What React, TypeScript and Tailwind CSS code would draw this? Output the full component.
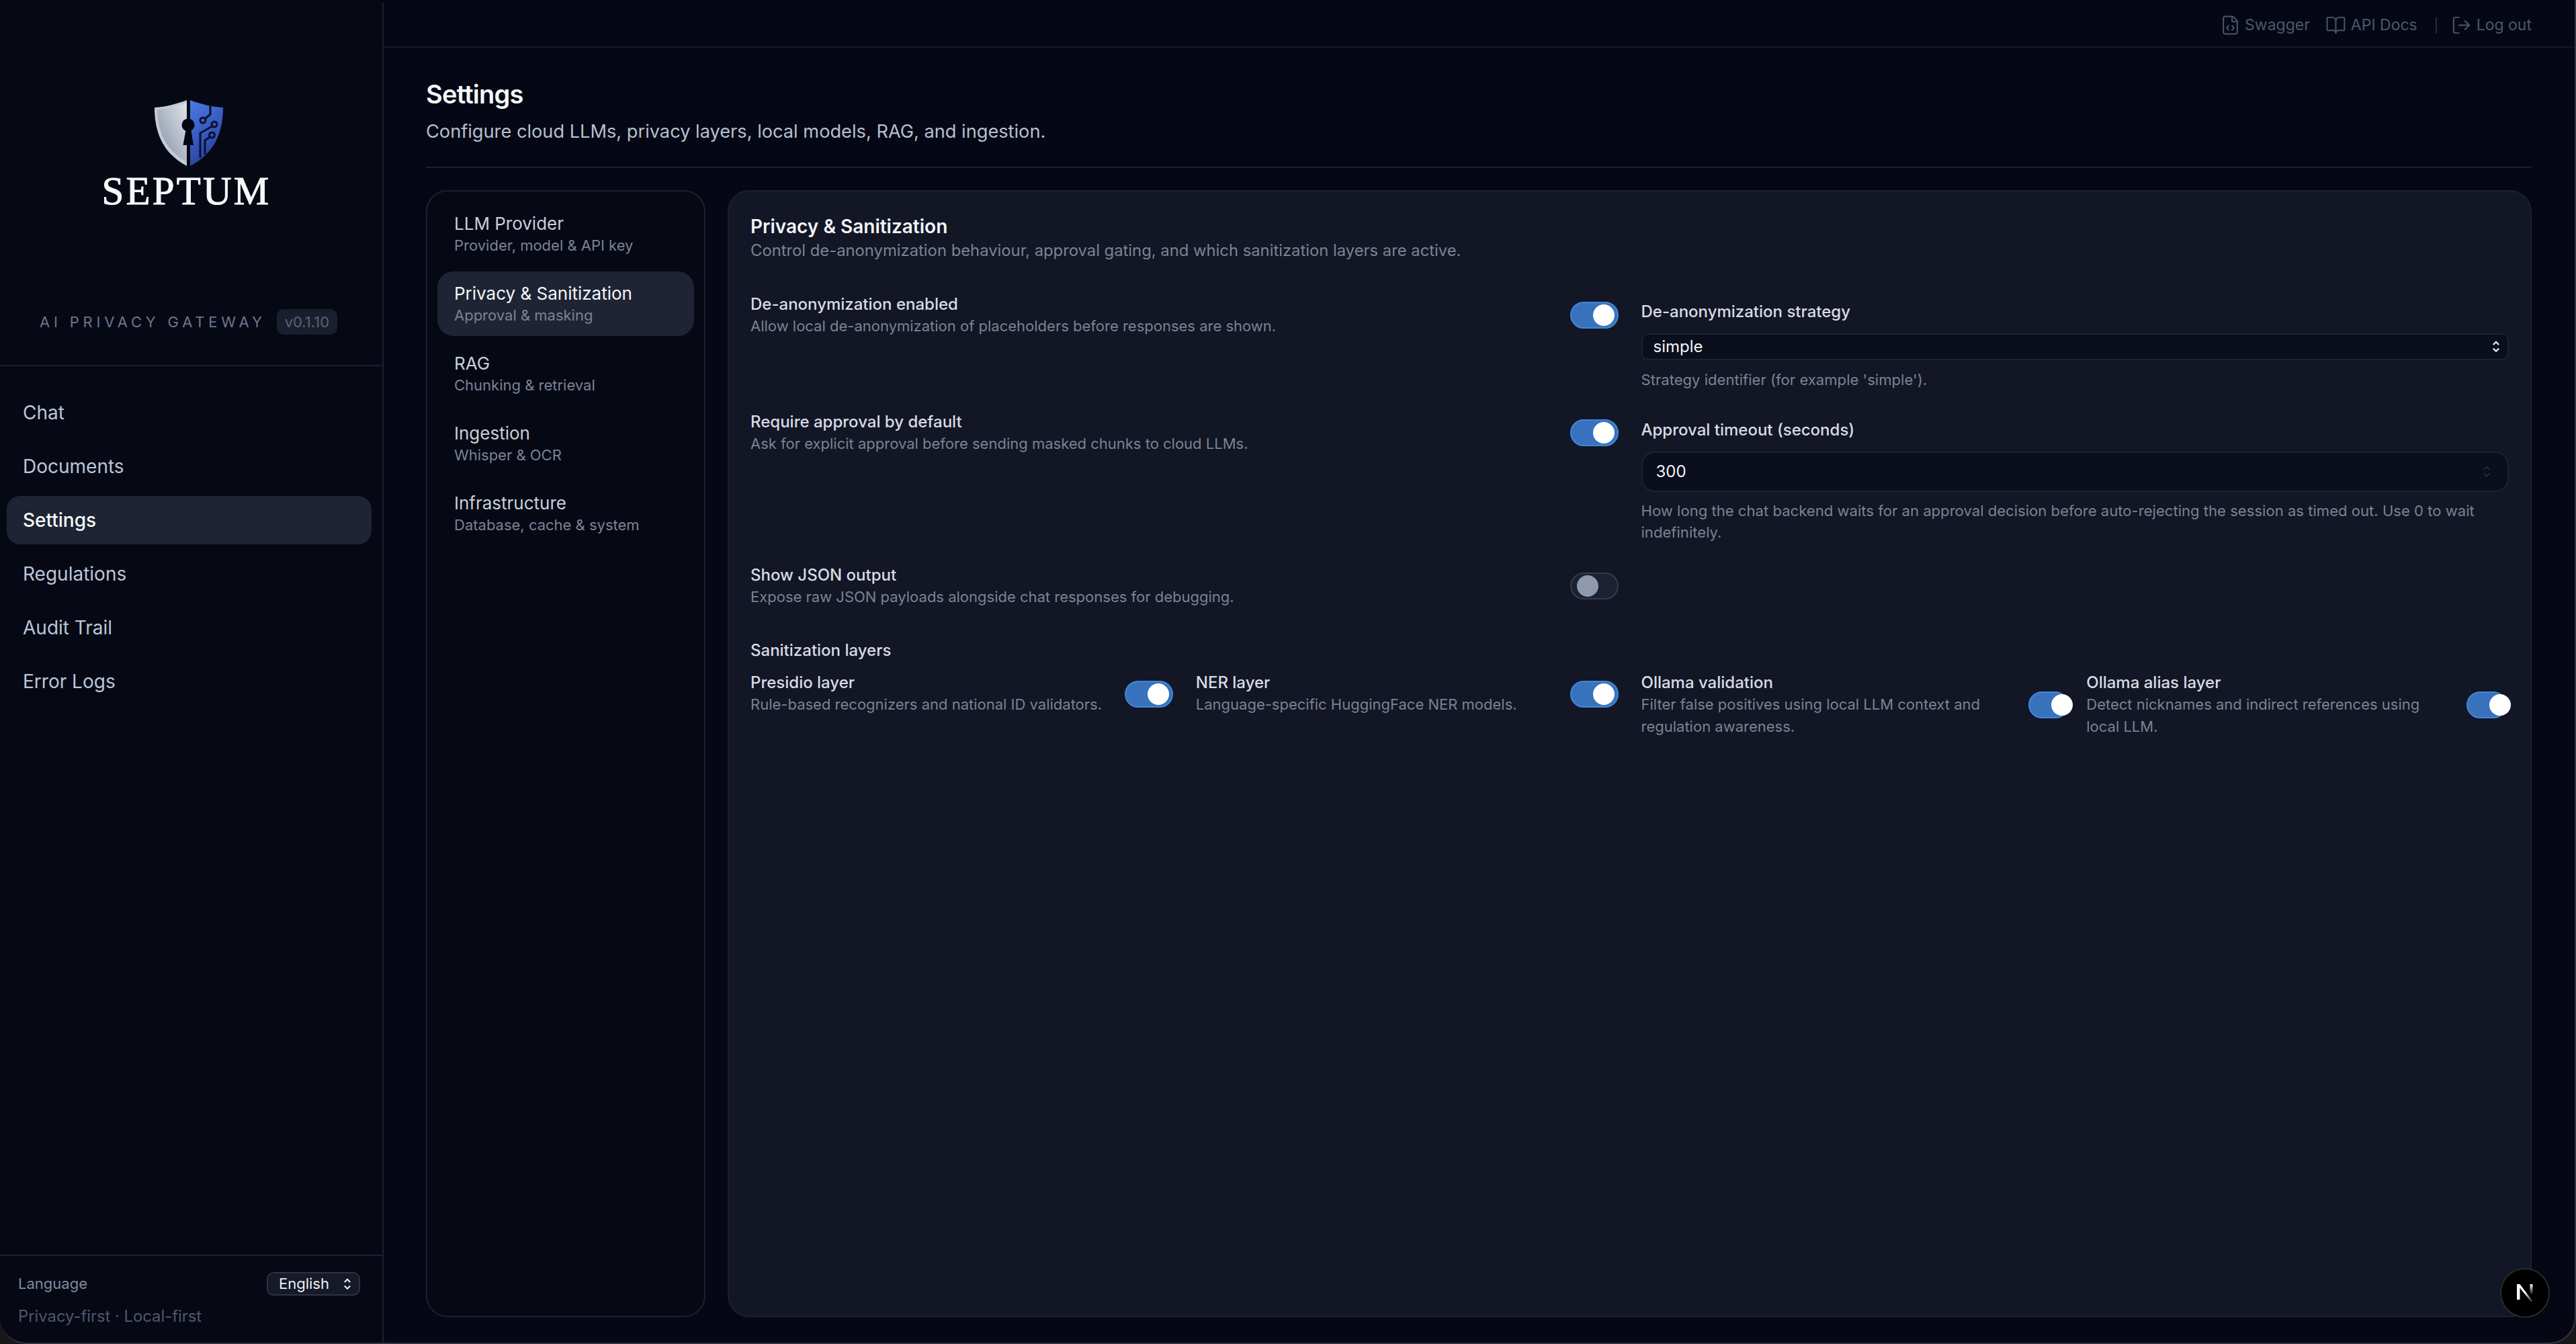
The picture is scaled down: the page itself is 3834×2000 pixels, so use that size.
import React from "react";
import { BookOpen, FileCode, LogOut } from "lucide-react";

function Shield() {
  return (
    <svg width="102" height="99" viewBox="0 0 102 99" className="block">
      <defs>
        <linearGradient id="sl2" x1="1" y1="0" x2="0" y2="1">
          <stop offset="0" stopColor="#e0e4ea" />
          <stop offset="1" stopColor="#818ca2" />
        </linearGradient>
        <linearGradient id="sb" x1="0" y1="0" x2="0.4" y2="1">
          <stop offset="0" stopColor="#4a7de6" />
          <stop offset="1" stopColor="#2a3f9f" />
        </linearGradient>
      </defs>
      <path d="M48 0C32 6 16 10 0 11C0 50 14 80 48 98Z" fill="#c5cbd5" />
      <path d="M48 4C34 9 18 13 4 14C5 49 18 76 48 92Z" fill="url(#sl2)" />
      <path d="M53 0C69 6 85 10 102 11C102 50 88 80 53 98Z" fill="url(#sb)" />
      <circle cx="50" cy="37" r="9.5" fill="#050814" />
      <path d="M47 42L42.5 67H58L54 42Z" fill="#050814" />
      <g fill="none" stroke="#0a1230" strokeWidth="3">
        <path d="M83 8V21L75 28" />
        <circle cx="72" cy="30" r="4" />
        <path d="M85.5 39L68 49V86" />
        <circle cx="89" cy="36" r="4" />
        <path d="M82 55L75 60V81" />
        <circle cx="85.5" cy="52" r="4" />
      </g>
    </svg>
  );
}

function Toggle({ on = true, w = "w-[72px]" }: { on?: boolean; w?: string }) {
  return on ? (
    <div className={`relative ${w} h-[40px] shrink-0 rounded-full border-2 border-[#3f87dc] bg-[#3872bd]`}>
      <div className="absolute left-[32px] top-[2px] h-[32px] w-[32px] rounded-full bg-white" />
    </div>
  ) : (
    <div className={`relative ${w} h-[40px] shrink-0 rounded-full border-2 border-[#333b4d] bg-[#1b2130]`}>
      <div className="absolute left-[8px] top-[2px] h-[32px] w-[32px] rounded-full bg-[#8f99ae]" />
    </div>
  );
}

function UpDown({ className = "", size = 18 }: { className?: string; size?: number }) {
  return (
    <svg width={size} height={size * 1.4} viewBox="0 0 10 14" fill="none" stroke="currentColor" strokeWidth="1.5" className={className}>
      <path d="M2 5L5 2L8 5" />
      <path d="M2 9L5 12L8 9" />
    </svg>
  );
}

function Text({ label, desc, className = "" }: { label: string; desc: string; className?: string }) {
  return (
    <div className={className}>
      <div className="text-[24px] leading-[32px] font-medium text-[#d8dce6]">{label}</div>
      <div className="text-[22px] leading-[33px] text-[#7b8295]">{desc}</div>
    </div>
  );
}

const navItems = ["Chat", "Documents", "Settings", "Regulations", "Audit Trail", "Error Logs"];
const subNav = [
  ["LLM Provider", "Provider, model & API key"],
  ["Privacy & Sanitization", "Approval & masking"],
  ["RAG", "Chunking & retrieval"],
  ["Ingestion", "Whisper & OCR"],
  ["Infrastructure", "Database, cache & system"],
];

export default function App() {
  return (
    <div className="relative h-[2000px] w-full overflow-hidden bg-[#17171a] [font-family:Inter,sans-serif]">
      <div className="flex h-full w-full overflow-hidden rounded-b-[40px] border-b-2 border-r-2 border-[#34343a] bg-[#050814] pt-[4px]">
        {/* Sidebar */}
        <aside className="flex h-full w-[571px] shrink-0 flex-col border-r-2 border-[#1b2031] bg-[#060914]">
          <div className="flex h-[541px] shrink-0 flex-col items-center border-b-2 border-[#1b2031]">
            <div className="mt-[145px] mr-[8px]">
              <Shield />
            </div>
            <div className="mr-[14px] mt-[6px] text-[#f7f8fa] [font-family:'Liberation_Serif',serif] text-[59px] leading-[60px] tracking-[3.2px] [-webkit-text-stroke:1px_#f7f8fa]">
              SEPTUM
            </div>
            <div className="mt-[146px] flex w-full items-center gap-[22px] pl-[59px]">
              <span className="text-[22px] leading-[38px] tracking-[5.8px] text-[#6c768f]">AI PRIVACY GATEWAY</span>
              <span className="-ml-[6px] rounded-[10px] bg-[#1a1f2e] px-[12px] text-[22px] leading-[38px] text-[#5a6378]">v0.1.10</span>
            </div>
          </div>
          <nav className="flex flex-1 flex-col gap-[8px] pl-[10px] pr-[16px] pt-[33px]">
            {navItems.map((n) => (
              <div
                key={n}
                className={`flex h-[72px] items-center rounded-[20px] px-[24px] text-[28px] ${
                  n === "Settings" ? "bg-[#1e2433] font-medium text-[#f8f9fb]" : "text-[#bcc5d8]"
                }`}
              >
                {n}
              </div>
            ))}
          </nav>
          <footer className="h-[131px] shrink-0 border-t-2 border-[#1b2031] px-[27px]">
            <div className="mt-[24px] flex items-center justify-between pr-[6px]">
              <span className="text-[22px] text-[#8189a0]">Language</span>
              <div className="flex h-[35px] w-[139px] items-center justify-between rounded-[10px] border-2 border-[#2c3345] bg-[#151928] pl-[16px] pr-[10px] text-[22px] text-[#eceff5]">
                English
                <UpDown size={14} />
              </div>
            </div>
            <div className="mt-[14px] text-[23.8px] leading-[34px] text-[#4f576c]">Privacy-first · Local-first</div>
          </footer>
        </aside>

        {/* Main */}
        <main className="flex min-w-0 flex-1 flex-col">
          <header className="flex h-[67px] shrink-0 items-center justify-end border-b-2 border-[#12162a] pr-[64px] pt-[2px] text-[23px] text-[#4d566e]">
            <span className="flex items-center gap-[6px]"><FileCode size={31} strokeWidth={1.5} />Swagger</span>
            <span className="ml-[23px] flex items-center gap-[7px]"><BookOpen size={31} strokeWidth={1.5} />API Docs</span>
            <span className="ml-[27px] h-[24px] w-[2px] bg-[#262c3c]" />
            <span className="ml-[21px] flex items-center gap-[7px]"><LogOut size={31} strokeWidth={1.5} />Log out</span>
          </header>
          <div className="flex min-h-0 flex-1 flex-col pl-[63px] pr-[64px] pb-[38px]">
            <div className="mt-[41px] text-[38px] leading-[56px] font-semibold tracking-[-0.02em] text-[#f6f7fa]">Settings</div>
            <div className="mt-[8px] text-[27.2px] leading-[40px] text-[#b7bfcd]">
              Configure cloud LLMs, privacy layers, local models, RAG, and ingestion.
            </div>
            <div className="mt-[32px] h-[2px] shrink-0 bg-[#1a1f2e]" />
            <div className="mt-[33px] flex min-h-0 flex-1 gap-[33px]">
              <div className="flex w-[416px] shrink-0 flex-col gap-[8px] rounded-[32px] border-2 border-[#1b2031] bg-[#060914] p-[15px]">
                {subNav.map(([a, b], i) => (
                  <div
                    key={a}
                    className={`flex h-[96px] flex-col justify-center rounded-[24px] pl-[25px] pr-[20px] ${i === 1 ? "bg-[#1e2433]" : ""}`}
                  >
                    <div className={`text-[26px] leading-[34px] ${i === 1 ? "text-[#f4f6f9]" : "text-[#c9cfdb]"}`}>{a}</div>
                    <div className="text-[22px] leading-[30px] text-[#7b8295]">{b}</div>
                  </div>
                ))}
              </div>
              <section className="min-w-0 flex-1 rounded-[32px] border-2 border-[#1b2031] bg-[#131625] px-[32px] pt-[32px]">
                <div className="text-[28px] leading-[40px] font-semibold text-[#f1f3f7]">Privacy & Sanitization</div>
                <div className="text-[23.8px] leading-[32px] text-[#7b8295]">
                  Control de-anonymization behaviour, approval gating, and which sanitization layers are active.
                </div>

                <div className="mt-[47px] grid grid-cols-2 gap-x-[34px]">
                  <div className="flex h-[66px] items-center justify-between">
                    <Text label="De-anonymization enabled" desc="Allow local de-anonymization of placeholders before responses are shown." />
                    <Toggle />
                  </div>
                  <div className="pt-[8px]">
                    <div className="text-[24px] leading-[40px] font-medium text-[#d8dce6]">De-anonymization strategy</div>
                    <div className="mt-[12px] flex h-[40px] items-center justify-between rounded-[10px] border-2 border-[#1d2233] bg-[#0b0e1c] pl-[16px] pr-[10px] text-[24px] text-[#f1f3f7]">
                      simple
                      <UpDown size={14} />
                    </div>
                    <div className="mt-[13px] text-[22.1px] leading-[32px] text-[#7b8295]">Strategy identifier (for example 'simple').</div>
                  </div>
                </div>

                <div className="mt-[30px] grid grid-cols-2 gap-x-[34px]">
                  <div className="flex h-[66px] items-center justify-between">
                    <Text label="Require approval by default" desc="Ask for explicit approval before sending masked chunks to cloud LLMs." />
                    <Toggle />
                  </div>
                  <div className="pt-[9px]">
                    <div className="text-[24px] leading-[40px] font-medium text-[#d8dce6]">Approval timeout (seconds)</div>
                    <div className="mt-[12px] flex h-[60px] items-center justify-between rounded-[20px] border-2 border-[#1d2233] bg-[#0b0e1c] pl-[20px] pr-[24px] text-[24px] text-[#f1f3f7]">
                      300
                      <UpDown size={14} className="text-[#262b3a]" />
                    </div>
                    <div className="mt-[12px] text-[22.1px] leading-[32px] text-[#7b8295]">
                      How long the chat backend waits for an approval decision before auto-rejecting the session as timed out. Use 0 to wait indefinitely.
                    </div>
                  </div>
                </div>

                <div className="mt-[31px] grid grid-cols-2 gap-x-[34px]">
                  <div className="flex h-[66px] items-center justify-between">
                    <Text label="Show JSON output" desc="Expose raw JSON payloads alongside chat responses for debugging." />
                    <Toggle on={false} />
                  </div>
                </div>

                <div className="mt-[43px] text-[24px] leading-[40px] font-medium text-[#d8dce6]">Sanitization layers</div>

                <div className="mt-[12px] grid grid-cols-4 items-start gap-x-[34px]">
                  <div className="flex h-[65px] items-center justify-between">
                    <Text label="Presidio layer" desc="Rule-based recognizers and national ID validators." />
                    <Toggle />
                  </div>
                  <div className="flex h-[65px] items-center justify-between">
                    <Text label="NER layer" desc="Language-specific HuggingFace NER models." />
                    <Toggle />
                  </div>
                  <div className="flex items-center gap-[32px]">
                    <Text className="w-[544px] shrink-0" label="Ollama validation" desc="Filter false positives using local LLM context and regulation awareness." />
                    <Toggle w="w-[60px]" />
                  </div>
                  <div className="flex items-center gap-[32px]">
                    <Text className="w-[534px] shrink-0" label="Ollama alias layer" desc="Detect nicknames and indirect references using local LLM." />
                    <Toggle w="w-[60px]" />
                  </div>
                </div>
              </section>
            </div>
          </div>
        </main>
      </div>

      {/* dev indicator */}
      <div className="absolute left-[3721px] top-[1887px] flex h-[74px] w-[74px] items-center justify-center rounded-full border-2 border-[#2a2a2e] bg-black">
        <svg width="26" height="28" viewBox="0 0 26 28">
          <defs>
            <linearGradient id="n1" x1="0" y1="0" x2="1" y2="1">
              <stop offset="0.5" stopColor="#fff" />
              <stop offset="1" stopColor="#fff" stopOpacity="0.1" />
            </linearGradient>
            <linearGradient id="n2" x1="0" y1="0" x2="0" y2="1">
              <stop offset="0" stopColor="#fff" />
              <stop offset="1" stopColor="#fff" stopOpacity="0" />
            </linearGradient>
          </defs>
          <path d="M1 1H5.5V24H1Z" fill="#fff" />
          <path d="M1 1H5.5L25 27H22Z" fill="url(#n1)" />
          <rect x="20.5" y="1" width="4" height="16" fill="url(#n2)" />
        </svg>
      </div>
    </div>
  );
}
